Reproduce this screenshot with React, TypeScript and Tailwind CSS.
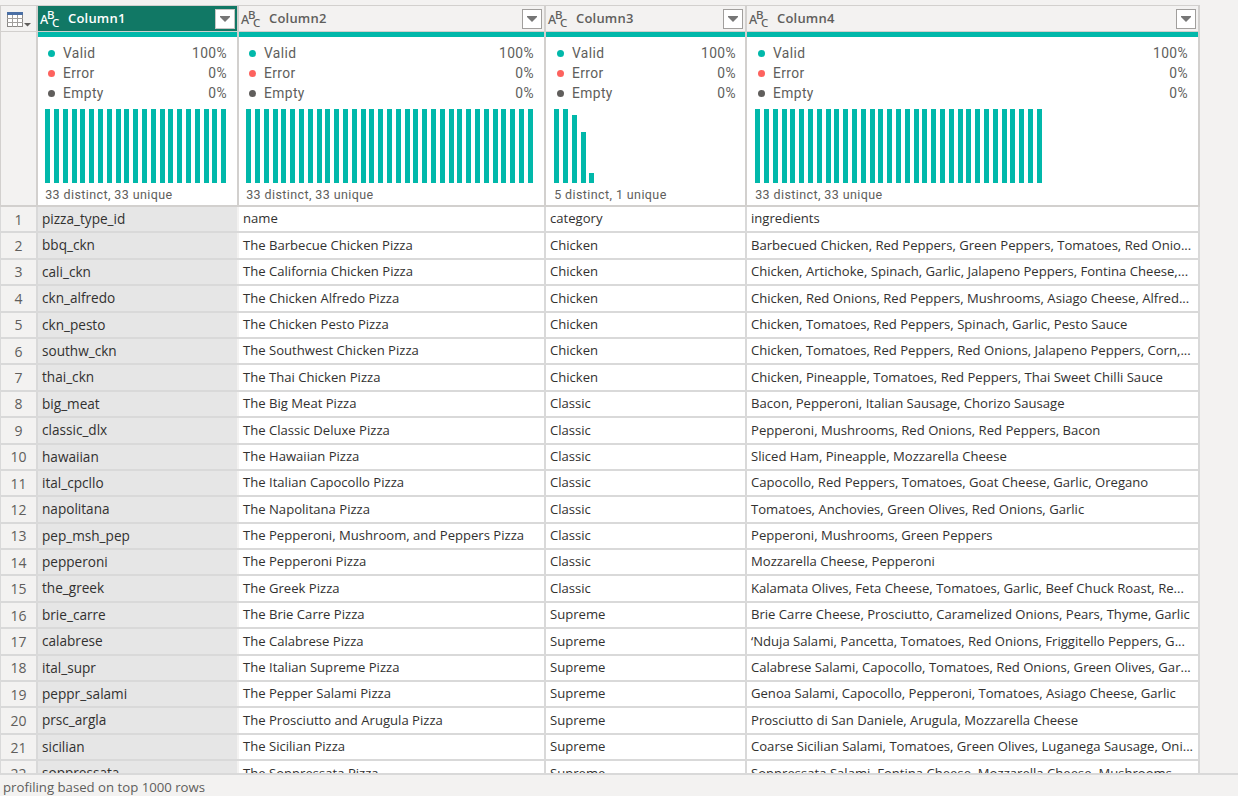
const rows = [
  ["pizza_type_id", "name", "category", "ingredients"],
  ["bbq_ckn", "The Barbecue Chicken Pizza", "Chicken", "Barbecued Chicken, Red Peppers, Green Peppers, Tomatoes, Red Onio..."],
  ["cali_ckn", "The California Chicken Pizza", "Chicken", "Chicken, Artichoke, Spinach, Garlic, Jalapeno Peppers, Fontina Cheese,..."],
  ["ckn_alfredo", "The Chicken Alfredo Pizza", "Chicken", "Chicken, Red Onions, Red Peppers, Mushrooms, Asiago Cheese, Alfred..."],
  ["ckn_pesto", "The Chicken Pesto Pizza", "Chicken", "Chicken, Tomatoes, Red Peppers, Spinach, Garlic, Pesto Sauce"],
  ["southw_ckn", "The Southwest Chicken Pizza", "Chicken", "Chicken, Tomatoes, Red Peppers, Red Onions, Jalapeno Peppers, Corn,..."],
  ["thai_ckn", "The Thai Chicken Pizza", "Chicken", "Chicken, Pineapple, Tomatoes, Red Peppers, Thai Sweet Chilli Sauce"],
  ["big_meat", "The Big Meat Pizza", "Classic", "Bacon, Pepperoni, Italian Sausage, Chorizo Sausage"],
  ["classic_dlx", "The Classic Deluxe Pizza", "Classic", "Pepperoni, Mushrooms, Red Onions, Red Peppers, Bacon"],
  ["hawaiian", "The Hawaiian Pizza", "Classic", "Sliced Ham, Pineapple, Mozzarella Cheese"],
  ["ital_cpcllo", "The Italian Capocollo Pizza", "Classic", "Capocollo, Red Peppers, Tomatoes, Goat Cheese, Garlic, Oregano"],
  ["napolitana", "The Napolitana Pizza", "Classic", "Tomatoes, Anchovies, Green Olives, Red Onions, Garlic"],
  ["pep_msh_pep", "The Pepperoni, Mushroom, and Peppers Pizza", "Classic", "Pepperoni, Mushrooms, Green Peppers"],
  ["pepperoni", "The Pepperoni Pizza", "Classic", "Mozzarella Cheese, Pepperoni"],
  ["the_greek", "The Greek Pizza", "Classic", "Kalamata Olives, Feta Cheese, Tomatoes, Garlic, Beef Chuck Roast, Re..."],
  ["brie_carre", "The Brie Carre Pizza", "Supreme", "Brie Carre Cheese, Prosciutto, Caramelized Onions, Pears, Thyme, Garlic"],
  ["calabrese", "The Calabrese Pizza", "Supreme", "‘Nduja Salami, Pancetta, Tomatoes, Red Onions, Friggitello Peppers, G..."],
  ["ital_supr", "The Italian Supreme Pizza", "Supreme", "Calabrese Salami, Capocollo, Tomatoes, Red Onions, Green Olives, Gar..."],
  ["peppr_salami", "The Pepper Salami Pizza", "Supreme", "Genoa Salami, Capocollo, Pepperoni, Tomatoes, Asiago Cheese, Garlic"],
  ["prsc_argla", "The Prosciutto and Arugula Pizza", "Supreme", "Prosciutto di San Daniele, Arugula, Mozzarella Cheese"],
  ["sicilian", "The Sicilian Pizza", "Supreme", "Coarse Sicilian Salami, Tomatoes, Green Olives, Luganega Sausage, Oni..."],
  ["soppressata", "The Soppressata Pizza", "Supreme", "Soppressata Salami, Fontina Cheese, Mozzarella Cheese, Mushrooms,..."],
];

const repeat = (n: number) => Array.from({ length: n }, () => 74);

const columns = [
  { name: "Column1", bars: repeat(21), caption: "33 distinct, 33 unique", active: true, inset: "pl-[7.2px]", pad: "pl-[10px] pr-[10px]" },
  { name: "Column2", bars: repeat(33), caption: "33 distinct, 33 unique", active: false, inset: "pl-[7.2px]", pad: "pl-[10px] pr-[10px]" },
  { name: "Column3", bars: [74, 74, 68, 51, 10], caption: "5 distinct, 1 unique", active: false, inset: "pl-[8.2px]", pad: "pl-[11px] pr-[9px]" },
  { name: "Column4", bars: repeat(33), caption: "33 distinct, 33 unique", active: false, inset: "pl-[8.2px]", pad: "pl-[11px] pr-[10px]" },
];

const GRID = "grid grid-cols-[38px_201px_307px_201px_453px] w-[1200px]";

function TableIcon() {
  return (
    <svg width="24" height="15" viewBox="0 0 24 15" className="block">
      <rect x="0.5" y="0.5" width="15" height="14" fill="#fff" stroke="#8a8886" />
      <rect x="0" y="0" width="16" height="3" fill="#4a6fa5" />
      <path d="M5.5 3v12M10.5 3v12M0 6.5h16M0 10.5h16" stroke="#a19f9d" strokeWidth="1" fill="none" />
      <path d="M17 11h7l-3.5 3.5z" fill="#605e5c" />
    </svg>
  );
}

function AbcIcon({ color }: { color: string }) {
  return (
    <svg width="21" height="20" viewBox="0 0 21 20" className="block shrink-0 overflow-visible" fill={color} fontFamily="'Noto Sans', sans-serif" fontWeight="500">
      <text x="0" y="15" fontSize="12.5">A</text>
      <text x="7" y="10" fontSize="11.5">B</text>
      <text x="12" y="18" fontSize="11.5">C</text>
    </svg>
  );
}

function HeaderCell({ name, active }: { name: string; active: boolean }) {
  return (
    <div className={`flex h-[25px] items-center border-r-2 border-[#d2d0ce] pt-[1px] pl-[2px] pr-[2px] ${active ? "bg-[#117865] text-white" : "bg-[#f3f2f1] text-[#605e5c]"}`}>
      <AbcIcon color={active ? "#ffffff" : "#605e5c"} />
      <span className="ml-[7px] flex-1 text-[13px] font-semibold tracking-[0.2px]">{name}</span>
      <button className={`flex h-[20px] w-[20px] items-center justify-center border bg-white ${active ? "border-[#c8c6c4]" : "border-[#a19f9d]"}`}>
        <svg width="10" height="6" viewBox="0 0 10 6"><path d="M0 0h10v1L5 6 0 1z" fill="#767676" /></svg>
      </button>
    </div>
  );
}

function LegendRow({ dot, label, value, pad }: { dot: string; label: string; value: string; pad: string }) {
  return (
    <div className={`flex h-[20px] items-center ${pad}`}>
      <span className={`h-[7px] w-[7px] rounded-full ${dot}`} />
      <span className="ml-[8px] flex-1">{label}</span>
      <span>{value}</span>
    </div>
  );
}

function ProfileCell({ bars, caption, inset, pad }: { bars: number[]; caption: string; inset: string; pad: string }) {
  return (
    <div className="flex h-[173px] flex-col border-r-2 border-[#d2d0ce] bg-white font-['Roboto',sans-serif] text-[13.8px] tracking-[0.4px] text-[#605e5c]">
      <div className="h-[5px] bg-[#01b8aa]" />
      <div className="h-[6px]" />
      <LegendRow dot="bg-[#01b8aa]" label="Valid" value="100%" pad={pad} />
      <LegendRow dot="bg-[#fd625e]" label="Error" value="0%" pad={pad} />
      <LegendRow dot="bg-[#605e5c]" label="Empty" value="0%" pad={pad} />
      <div className={`mt-[6px] flex h-[74px] items-end gap-[3.8px] ${inset}`}>
        {bars.map((h, i) => (
          <div key={i} className="w-[5px] bg-[#01b8aa]" style={{ height: h }} />
        ))}
      </div>
      <div className={`mt-[3px] text-[12.5px] leading-[18px] ${inset}`}>{caption}</div>
    </div>
  );
}

export default function App() {
  return (
    <div className="flex h-[796px] w-[1238px] flex-col overflow-hidden bg-[#f3f2f1] font-['Open_Sans',sans-serif]">
      <div className="min-h-0 flex-1 overflow-hidden pt-[5px]">
        <div className="w-[1200px] border-t border-[#d2d0ce]">
          <div className={`${GRID} border-b border-[#d2d0ce]`}>
            <div className="flex h-[25px] items-center justify-center border-r-2 border-l border-[#d2d0ce] pt-[1px]">
              <TableIcon />
            </div>
            {columns.map((c) => (
              <HeaderCell key={c.name} name={c.name} active={c.active} />
            ))}
          </div>
          <div className={`${GRID} border-b-2 border-[#d2d0ce]`}>
            <div className="border-r-2 border-l border-[#d2d0ce]" />
            {columns.map((c) => (
              <ProfileCell key={c.name} bars={c.bars} caption={c.caption} inset={c.inset} pad={c.pad} />
            ))}
          </div>
          {rows.map((r, i) => (
            <div key={i} className={`${GRID} h-[26.4px] border-b-2 border-[#d9d9d9] text-[13.1px] text-[#323130]`}>
              <div className="flex items-center justify-center border-r-2 border-l border-[#d9d9d9] text-[14px] text-[#605e5c]">{i + 1}</div>
              <div className="flex items-center border-r-2 border-[#f3f2f1] bg-[#e6e6e6] pl-[4px] text-[13.6px]">{r[0]}</div>
              <div className="flex items-center border-r-2 border-[#d9d9d9] bg-white pl-[4px]">{r[1]}</div>
              <div className="flex items-center border-r-2 border-[#d9d9d9] bg-white pl-[4px]">{r[2]}</div>
              <div className="flex items-center overflow-hidden border-r-2 border-[#d9d9d9] bg-white pl-[4px] whitespace-nowrap">{r[3]}</div>
            </div>
          ))}
        </div>
      </div>
      <div className="flex h-[23px] shrink-0 items-center border-t-2 border-[#d9d9d9] bg-[#f3f2f1] pl-[3px] pt-[4px] text-[13.2px] text-[#605e5c]">
        profiling based on top 1000 rows
      </div>
    </div>
  );
}
